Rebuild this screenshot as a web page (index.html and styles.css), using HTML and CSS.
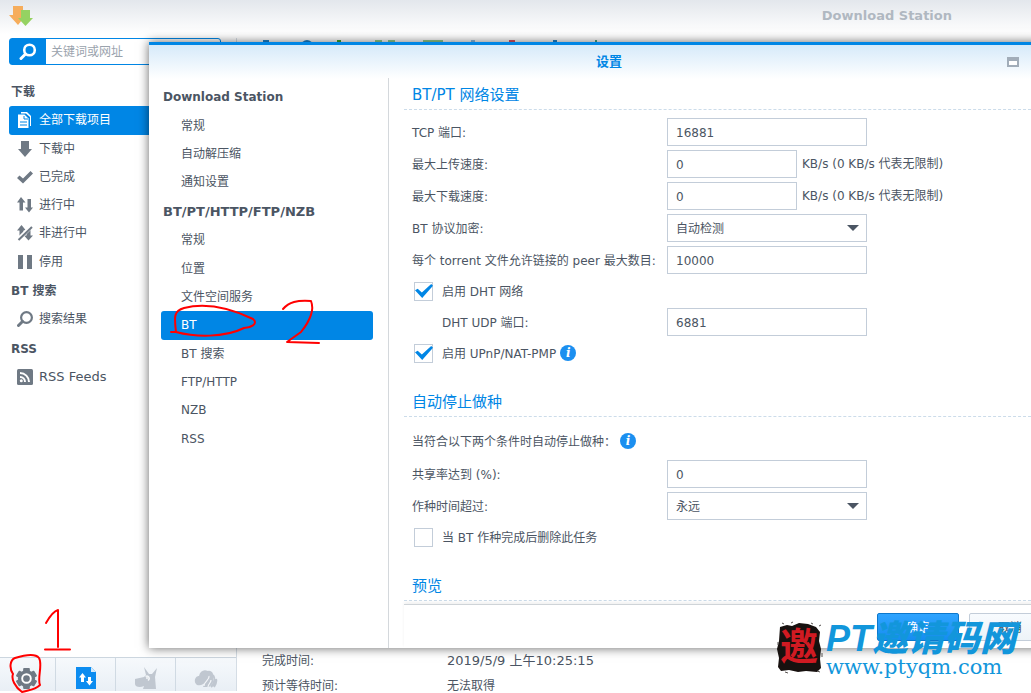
FILE: index.html
```html
<!DOCTYPE html>
<html lang="zh-CN">
<head>
<meta charset="utf-8">
<title>Download Station</title>
<link rel="stylesheet" href="styles.css">
</head>
<body>
<div class="app">
  <header class="app-header">
    <svg class="logo" viewBox="0 0 24 22" width="24" height="22" aria-hidden="true">
      <path d="M4 1h10v9h3l-8 10L0 10h4z" fill="#f6ad5c"/><path d="M12 5h9v8h3l-7.500 8L9 13h3z" fill="#95d262"/>
    </svg>
    <h1 class="app-title">Download Station</h1>
  </header>
  <div class="app-body">
    <aside class="sidebar">
      <form class="search">
        <button class="search-btn" type="button" aria-label="搜索"><svg viewBox="0 0 18 18" width="18" height="18"><circle cx="10.500" cy="7" r="5.300" fill="none" stroke="#fff" stroke-width="2.600"/><path d="M6.500 11L2 15.500" stroke="#fff" stroke-width="3" stroke-linecap="round"/></svg></button>
        <input class="search-input" type="text" placeholder="关键词或网址" aria-label="关键词或网址">
      </form>
      <nav class="menu">
        <h2 class="menu-head">下载</h2>
        <a class="menu-item active" href="#"><svg class="icon" viewBox="0 0 16 16"><path d="M4 0h6l4 4v10h-1V5L9 1.500H4z" fill="#fff"/><path d="M1 2.500h6.500l4 4V16H1z" fill="#fff"/><path d="M3 10h7M3 13h7M7 4v3h4" stroke="#0086e5" stroke-width="1" fill="none"/></svg>全部下载项目</a>
        <a class="menu-item" href="#"><svg class="icon" viewBox="0 0 16 16"><path d="M4 0h8v8h3l-7 8-7-8h3z"/></svg>下载中</a>
        <a class="menu-item" href="#"><svg class="icon" viewBox="0 0 16 16"><path d="M0 9l2.500-2.500L6 9.500 13.500 2 16 4.500 6 14.500z"/></svg>已完成</a>
        <a class="menu-item" href="#"><svg class="icon" viewBox="0 0 16 16"><path d="M4 0l4.500 5.500H6V13.500H2.500V5.500H0zM12 15.500l4-5h-2V2h-3.500v8.500H8z"/></svg>进行中</a>
        <a class="menu-item" href="#"><svg class="icon" viewBox="0 0 16 16"><path d="M4.500 0L9 5.500H6.500v6h-4v-6H0zM11.500 15.500L16 10.500h-2.500V5h-4v5.500H7z"/><path d="M1 14.500L14.500 1.500" stroke="#fff" stroke-width="4"/><path d="M1.500 15L15 2" stroke="#6f7984" stroke-width="2"/></svg>非进行中</a>
        <a class="menu-item" href="#"><svg class="icon" viewBox="0 0 16 16"><path d="M1 1h5v14H1zM10 1h5v14h-5z"/></svg>停用</a>
        <h2 class="menu-head">BT 搜索</h2>
        <a class="menu-item" href="#"><svg class="icon" viewBox="0 0 16 16"><circle cx="9.500" cy="6.500" r="5.400" fill="none" stroke="#6f7984" stroke-width="2.200"/><path d="M5.500 10.500L1.500 14.500" stroke="#6f7984" stroke-width="3" stroke-linecap="round"/></svg>搜索结果</a>
        <h2 class="menu-head">RSS</h2>
        <a class="menu-item latin" href="#"><svg class="icon" viewBox="0 0 16 16"><rect width="16" height="16" rx="1.500"/><path d="M3 4a9 9 0 0 1 9 9M3 8a5 5 0 0 1 5 5" fill="none" stroke="#fff" stroke-width="2"/><circle cx="4.300" cy="11.700" r="1.500" fill="#fff"/></svg>RSS Feeds</a>
      </nav>
      <div class="tools">
        <button class="tool" type="button" aria-label="设置"><svg viewBox="0 0 24 24" width="23" height="23"><g fill="#6f7984"><circle cx="12" cy="12" r="9"/><rect x="8.500" y="1" width="7" height="22" rx="1"/><rect x="8.500" y="1" width="7" height="22" rx="1" transform="rotate(60 12 12)"/><rect x="8.500" y="1" width="7" height="22" rx="1" transform="rotate(120 12 12)"/></g><circle cx="12" cy="12" r="4.500" fill="none" stroke="#fff" stroke-width="2"/></svg></button>
        <button class="tool" type="button" aria-label="传输"><svg viewBox="0 0 20 22" width="20" height="22"><path d="M0 0h15l5 5v17H0z" fill="#0c8cf0"/><path d="M15 0v5h5z" fill="#d3eafc"/><path d="M6.500 6l3.500 4.500H8V15H5v-4.500H3zM13.500 18.500l3.500-4.500h-2V10h-3v4h-2z" fill="#fff"/></svg></button>
        <button class="tool" type="button" aria-label="eMule"><svg viewBox="0 0 24 22" width="24" height="22"><path d="M1 12c3-1 6-1 9-2l2-2L10 0l5 7h3l5-6-2 9 1 12H9l1-3c-4 2-9 1-9-2z" fill="#c0c7d0"/><path d="M11.500 9.500c3-1.500 5 2 2.500 4" fill="none" stroke="#f3f6f9" stroke-width="1.500"/><circle cx="13" cy="11" r="1" fill="#f3f6f9"/></svg></button>
        <button class="tool" type="button" aria-label="NZB"><svg viewBox="0 0 24 22" width="24" height="22"><path d="M3 18c-4-3-2-9 2-9C6 4 10 2 14 4c4-1 6 3 5 6 1 4 0 8-4 10H9c1-2 1-3 2-4-3 1-3 3-8 2z" fill="#c0c7d0"/><path d="M19 8c3 5 1 9-2 12M22 12c1 3 0 5-2 8" fill="none" stroke="#c0c7d0" stroke-width="2"/><path d="M15 9c1 4-5 5-5 10M17 13c0 3-3 4-3 7" fill="none" stroke="#f3f6f9" stroke-width="1.200"/></svg></button>
      </div>
    </aside>
    <main class="main">
      <div class="strip"><i class="b1"></i><i class="b2"></i><i class="b3"></i><i class="b4"></i><i class="b5"></i><i class="b6"></i><i class="b7"></i><i class="b8"></i><i class="b9"></i></div>
      <dl class="detail"><dt>完成时间:</dt><dd class="date">2019/5/9 上午10:25:15</dd><dt>预计等待时间:</dt><dd>无法取得</dd></dl>
    </main>
  </div>

  <section class="dialog" role="dialog" aria-labelledby="dialog-title">
    <header class="dialog-head">
      <h2 class="dialog-title" id="dialog-title">设置</h2>
      <button class="win-btn" type="button" aria-label="最大化"></button>
    </header>
    <div class="dialog-body">
      <nav class="dialog-nav">
        <h3 class="nav-head">Download Station</h3>
        <a class="nav-item" href="#">常规</a>
        <a class="nav-item" href="#">自动解压缩</a>
        <a class="nav-item" href="#">通知设置</a>
        <h3 class="nav-head wide">BT/PT/HTTP/FTP/NZB</h3>
        <a class="nav-item" href="#">常规</a>
        <a class="nav-item" href="#">位置</a>
        <a class="nav-item" href="#">文件空间服务</a>
        <a class="nav-item active" href="#">BT</a>
        <a class="nav-item" href="#">BT 搜索</a>
        <a class="nav-item" href="#">FTP/HTTP</a>
        <a class="nav-item" href="#">NZB</a>
        <a class="nav-item" href="#">RSS</a>
      </nav>
      <form class="pane">
        <div class="scroll">
          <h3 class="section-title">BT/PT 网络设置</h3>
          <div class="rows">
            <div class="row"><label class="label" for="tcp">TCP 端口:</label><input class="field" id="tcp" type="text" value="16881"></div>
            <div class="row"><label class="label" for="up">最大上传速度:</label><input class="field short" id="up" type="text" value="0"><span class="unit">KB/s (0 KB/s 代表无限制)</span></div>
            <div class="row"><label class="label" for="down">最大下载速度:</label><input class="field short" id="down" type="text" value="0"><span class="unit">KB/s (0 KB/s 代表无限制)</span></div>
            <div class="row"><label class="label" for="enc">BT 协议加密:</label><select class="field" id="enc"><option>自动检测</option></select></div>
            <div class="row"><label class="label" for="peer">每个 torrent 文件允许链接的 peer 最大数目:</label><input class="field" id="peer" type="text" value="10000"></div>
            <div class="row check"><input class="box" id="dht" type="checkbox" checked><label for="dht">启用 DHT 网络</label></div>
            <div class="row"><label class="label sub" for="udp">DHT UDP 端口:</label><input class="field" id="udp" type="text" value="6881"></div>
            <div class="row check"><input class="box" id="upnp" type="checkbox" checked><label for="upnp">启用 UPnP/NAT-PMP</label><span class="info">i</span></div>
          </div>
          <h3 class="section-title">自动停止做种</h3>
          <div class="rows">
            <p class="row note"><span class="note-text">当符合以下两个条件时自动停止做种：</span><span class="info">i</span></p>
            <div class="row"><label class="label" for="ratio">共享率达到 (%):</label><input class="field" id="ratio" type="text" value="0"></div>
            <div class="row"><label class="label" for="time">作种时间超过:</label><select class="field" id="time"><option>永远</option></select></div>
            <div class="row check"><input class="box" id="del" type="checkbox"><label for="del">当 BT 作种完成后删除此任务</label></div>
          </div>
          <h3 class="section-title">预览</h3>
        </div>
        <footer class="actions"><button class="btn primary" type="button">确定</button><button class="btn" type="button">取消</button></footer>
      </form>
    </div>
  </section>

  <div class="watermark">
    <svg class="seal" viewBox="0 0 46 52" width="46" height="52" aria-hidden="true"><path d="M3 5l7-2 5 1 7-3 9 1 8 3 4 5-1 9 2 8-1 10 1 9-4 4-11-1-8 1-9-2-8 1-3-4 1-9-2-9 2-8z" fill="#17110f"/><path d="M5 1l2 1M14 1l2-1M34 1l2 1M42 4l2-1M1 20v3M45 31v4M8 50l3 1M40 49l3 1" stroke="#55504e"/><text class="seal-text" x="22" y="38" text-anchor="middle">邀</text></svg>
    <div class="wm-text"><span class="wm-name">PT邀请码网</span><span class="wm-url">www.ptyqm.com</span></div>
  </div>

  <svg class="marks" viewBox="0 0 1031 693" width="1031" height="693" aria-hidden="true">
    <path d="M46 623C50 616 54 611 58 610V647M45 649.500H70"/>
    <path d="M13 674C9 668 10 660 15 658C25 655 35 653 39 658C43 664 37 679 40 685C35 690 29 690 22 692C15 687 11 679 13 674"/>
    <path d="M171 332H176C174 316 174 311 184 308C208 302 232 309 253 319C259 324 250 328 244 328C224 338 195 337 176 332"/>
    <path d="M283 309C289 302 297 300 311 301C315 311 309 322 301 332L287 342L319 343"/>
  </svg>
</div>
</body>
</html>
```

FILE: styles.css
```css
* { box-sizing: border-box; }
body { margin: 0; background: #fff; color: #4b5563; font: 12px/18px "DejaVu Sans", "Noto Sans CJK SC", sans-serif; }
h1, h2, h3, p, dl, dd { margin: 0; font-size: inherit; }
button, input, select { font: inherit; color: inherit; margin: 0; }
a { color: inherit; text-decoration: none; }

.app { position: relative; display: flex; flex-direction: column; height: 100vh; padding-bottom: 2px; overflow: hidden; }
.app-header { display: flex; justify-content: space-between; flex: none; height: 38px; padding: 5px 79px 0 9px; background: linear-gradient(#e3e7ec, #fff 90%); }
.app-title { color: #b0b8c1; font-size: 13px; line-height: 21px; }
.app-body { display: flex; flex: 1; min-height: 0; }

.sidebar { display: flex; flex-direction: column; width: 237px; flex: none; border-right: 1px solid #d5dde5; }
.search { display: flex; height: 27px; margin: 0 15px 12px 9px; border: 1px solid #0086e5; border-radius: 3px; flex: none; }
.search-btn { display: flex; align-items: center; justify-content: center; width: 36px; padding: 0; border: 0; background: #0086e5; }
.search-input { flex: 1; min-width: 0; padding: 0 5px; border: 0; background: none; }
.search-input::placeholder { color: #9aa3ad; opacity: 1; }
.menu { display: flex; flex-direction: column; height: 314px; padding: 0 9px; }
.menu-head, .menu-item { display: flex; align-items: center; flex: 1; }
.menu-head { padding: 1px 0 0 2px; }
.menu-item { gap: 6px; padding-left: 8px; border-radius: 3px; }
.menu-item.latin { font-size: 13px; }
.menu-item.active { background: #0086e5; color: #fff; }
.icon { width: 16px; height: 16px; fill: #6f7984; }
.tools { display: grid; grid-template-columns: 56px 1fr 1fr 1fr; height: 34px; margin-top: auto; border-top: 1px solid #ccd6df; background: linear-gradient(#f6f9fc, #e9eff5); }
.tool { display: flex; justify-content: center; align-items: flex-start; padding: 9px 0 0; border: 0; border-right: 1px solid #d0dae3; background: none; overflow: hidden; }
.tool:first-child { padding-right: 3px; }
.tool:last-child { border-right: 0; }

.main { display: flex; flex-direction: column; justify-content: space-between; flex: 1; overflow: hidden; }
.strip { display: grid; grid-template-columns: 38px 36px 38px 48px 48px 38px 44px 42px 20px; padding: 2px 0 0 26px; }
.strip i { width: 6px; height: 6px; background: #1c86d1; }
.strip .b2 { width: 12px; border-radius: 6px 6px 0 0; }
.strip .b3 { width: 4px; background: #43a52c; }
.strip .b4 { width: 20px; background: linear-gradient(90deg, #94cf90 7px, transparent 7px 13px, #94cf90 13px); }
.strip .b5 { width: 20px; background: #94cf90; }
.strip .b6 { width: 4px; background: #8cbfe8; }
.strip .b7 { background: #e05263; }
.strip .b8 { width: 4px; }
.strip .b9 { width: 2px; background: #43a589; }
.detail { display: grid; grid-template-columns: 185px 1fr; grid-auto-rows: 25px; height: 39px; padding-left: 25px; }
.date { font-size: 13px; }

.dialog { position: absolute; left: 149px; right: -38px; top: 42px; bottom: 45px; display: flex; flex-direction: column; border-top: 3px solid #0086e5; background: linear-gradient(#d6eafa, #fff 34px); box-shadow: 0 0 10px rgba(0, 0, 0, .6); }
.dialog-head { display: grid; grid-template-columns: 1fr auto 1fr; align-items: center; height: 33px; padding: 0 50px; flex: none; }
.dialog-title { grid-column: 2; color: #0086e5; font-size: 13px; }
.win-btn { justify-self: end; width: 12px; height: 10px; padding: 0; border: 2px solid #a2adb9; border-top: 4px solid #a2adb9; background: #fff; }
.dialog-body { display: flex; flex: 1; min-height: 0; }
.dialog-nav { display: flex; flex-direction: column; width: 240px; padding: 4px 15px 195px 12px; border-right: 1px solid #d4d8dc; }
.nav-head, .nav-item { display: flex; align-items: center; flex: 1; border-radius: 3px; }
.nav-head { padding: 1px 0 0 2px; }
.nav-head.wide { font-size: 13px; }
.nav-item { padding-left: 20px; }
.nav-item.active { background: #0086e5; color: #fff; }
.pane { display: flex; flex-direction: column; flex: 1; min-width: 0; }
.scroll { flex: 1; min-height: 0; padding: 2px 18px 0 15px; overflow: hidden; }
.section-title { height: 30px; padding-left: 8px; border-bottom: 1px dashed #ccdcea; color: #0086e5; font-size: 15px; font-weight: 400; line-height: 31px; }
.rows { display: flex; flex-direction: column; gap: 4px; padding: 8px 0 21px 8px; }
.row { display: flex; align-items: center; min-height: 28px; }
.row label, .note-text { padding-top: 2px; }
.row.check { min-height: 26px; gap: 9px; padding-left: 2px; }
.row.note { min-height: 31px; gap: 4px; }
.label { width: 255px; white-space: nowrap; }
.label.sub { padding-left: 30px; }
.field { width: 200px; height: 28px; padding: 2px 8px 0; border: 1px solid #c3cdd9; border-radius: 0; background: #fff; }
.field.short { width: 130px; }
select.field { appearance: none; background: url("data:image/svg+xml,%3Csvg xmlns='http://www.w3.org/2000/svg' width='12' height='6'%3E%3Cpath d='M0 0h12L6 6z' fill='%234b5563'/%3E%3C/svg%3E") no-repeat right 7px center; }
.unit { padding-left: 5px; }
.box { display: grid; place-items: center; width: 19px; height: 19px; border: 1px solid #c3cdd9; background: #fff; appearance: none; }
.box:checked::before { content: ""; width: 18px; height: 14px; background: #0086e5; clip-path: polygon(0 45%, 15% 34%, 38% 60%, 90% 0, 100% 12%, 40% 100%); }
.info { display: inline-flex; align-items: center; justify-content: center; width: 16px; height: 16px; border-radius: 50%; background: #1b8ff0; color: #fff; font: italic bold 12px/16px "DejaVu Serif", serif; }
.row.check .info { margin-left: -5px; }
.actions { display: flex; justify-content: flex-end; gap: 10px; height: 44px; margin-left: 15px; padding: 8px 18px 0 0; border-top: 1px solid #cfd4d8; box-shadow: 0 -2px 3px rgba(0, 0, 0, .06); }
.btn { width: 82px; height: 28px; padding: 2px 0 0; border: 1px solid #c3cdd9; border-radius: 2px; background: linear-gradient(#f8fbfe, #edf3f8); }
.btn.primary { border-color: #0d78cc; background: linear-gradient(#2fa4ff, #168df0); color: #fff; }

.watermark { position: absolute; left: 777px; top: 620px; display: flex; gap: 3px; }
.seal { margin-top: 2px; overflow: visible; }
.seal-text { fill: #d01a22; font: bold 38px "Noto Sans CJK SC", sans-serif; }
.wm-text { display: flex; flex-direction: column; color: #1296db; white-space: nowrap; }
.wm-name { font: italic 900 36px/38px "Liberation Sans", "Noto Sans CJK SC", sans-serif; }
.wm-url { font: 21px/18px "DejaVu Serif", serif; }
.marks { position: absolute; left: 0; top: 0; fill: none; stroke: #f00; stroke-width: 2; stroke-linecap: round; stroke-linejoin: round; pointer-events: none; }
```
